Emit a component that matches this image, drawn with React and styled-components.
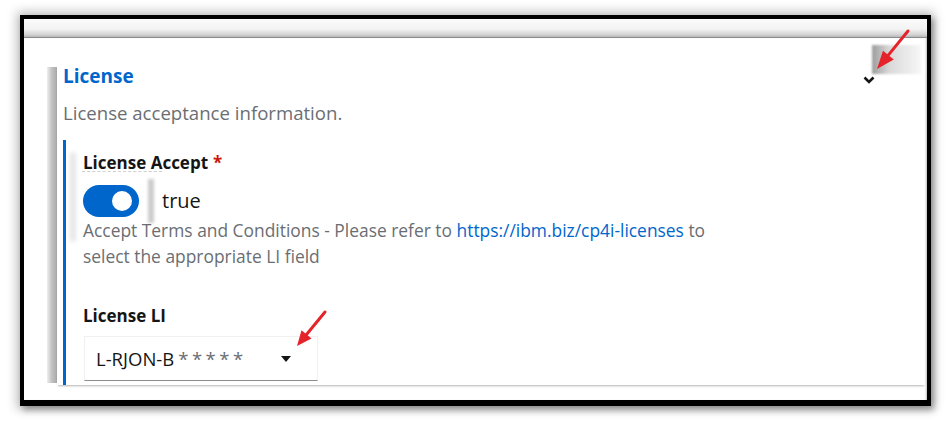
import React from "react";
import styled, { createGlobalStyle } from "styled-components";

const GlobalStyle = createGlobalStyle`
  html, body { margin: 0; padding: 0; background: #fff; }
  body { font-family: "Open Sans", "Noto Sans", sans-serif; }
  * { box-sizing: border-box; }
`;

const Page = styled.div`
  position: relative;
  width: 952px;
  height: 422px;
  padding: 15px 0 0 20px;
  overflow: hidden;
  background: #fff;
`;

const Frame = styled.div`
  width: 911px;
  height: 391px;
  border: 4px solid #000;
  border-bottom-width: 6px;
  background: #fff;
  box-shadow: 0 0 10px 3px rgba(0, 0, 0, 0.26), 3px 4px 6px rgba(0, 0, 0, 0.3);
  display: flex;
  flex-direction: column;
`;

const TopStrip = styled.div`
  flex: none;
  height: 19px;
  border-bottom: 1px solid #8c8c8c;
  background: linear-gradient(to bottom, #fbfbfb 0%, #f3f3f3 55%, #d6d6d6 85%, #b8b8b8 100%);
`;

const Body = styled.div`
  flex: 1;
  display: flex;
  align-items: flex-start;
  padding: 29px 0 15px 23px;
  box-shadow: inset -2px 0 2px -1px rgba(0, 0, 0, 0.25);
`;

const ShadowBand = styled.div`
  flex: none;
  width: 10px;
  align-self: stretch;
  margin-bottom: 2px;
  background: linear-gradient(to right, #efefef 0%, #c4c4c4 45%, #a9a9a9 100%);
`;

const Sheet = styled.section`
  flex: 1;
  margin-right: 2px;
  padding-left: 6px;
  background: #fff;
  display: flex;
  flex-direction: column;
  box-shadow: 0 2px 2px -1px rgba(0, 0, 0, 0.3);
`;

const Header = styled.div`
  display: flex;
  justify-content: space-between;
  align-items: flex-start;
  padding-right: 50px;
`;

const Title = styled.h2`
  margin: 0;
  font-size: 19px;
  line-height: 19px;
  font-weight: 700;
  color: #0066cc;
`;

const Chevron = styled.svg`
  margin-top: 9px;
  display: block;
`;

const Description = styled.p`
  margin: 15px 0 0;
  font-size: 18.6px;
  line-height: 24px;
  color: #6a6e73;
`;

const FieldGroup = styled.div`
  position: relative;
  margin-top: 15px;
  border-left: 3px solid #0066cc;
  padding: 13px 0 4px 17px;
  display: flex;
  flex-direction: column;
  align-items: flex-start;

  &::before {
    content: "";
    position: absolute;
    left: 4px;
    top: 12px;
    width: 6px;
    height: 90px;
    border-radius: 3px;
    background: rgba(0, 0, 0, 0.1);
    filter: blur(2px);
  }
`;

const FieldLabel = styled.label`
  font-size: 17px;
  line-height: 20px;
  font-weight: 700;
  color: #151515;
  margin-top: ${(p) => p.$gap || 0}px;
`;

const Required = styled.span`
  color: #c9190b;
  margin-left: 5px;
`;

const ToggleRow = styled.div`
  position: relative;
  margin-top: 12px;
  height: 32px;
  display: flex;
  align-items: center;
  gap: 23px;

  &::before {
    content: "";
    position: absolute;
    left: -1px;
    top: -14px;
    width: 80px;
    border-top: 1px dashed #cfcfcf;
  }

  &::after {
    content: "";
    position: absolute;
    left: 65px;
    top: -6px;
    width: 6px;
    height: 44px;
    background: rgba(0, 0, 0, 0.2);
    filter: blur(1.5px);
  }
`;

const SwitchTrack = styled.span`
  width: 56px;
  height: 32px;
  border-radius: 16px;
  background: #0066cc;
  display: flex;
  align-items: center;
  justify-content: flex-end;
  padding-right: 7px;
`;

const SwitchKnob = styled.span`
  width: 20px;
  height: 20px;
  border-radius: 50%;
  background: #fff;
`;

const ToggleText = styled.span`
  font-size: 20px;
  line-height: 32px;
  color: #151515;
`;

const Helper = styled.p`
  margin: 0;
  font-size: 17.4px;
  line-height: 26px;
  color: #6a6e73;
`;

const Link = styled.a`
  color: #0066cc;
  text-decoration: none;
`;

const Select = styled.div`
  margin-top: 10px;
  margin-left: 1px;
  width: 234px;
  height: 45px;
  border: 1px solid #f0f0f0;
  border-bottom-color: #8a8d90;
  display: flex;
  align-items: center;
  justify-content: space-between;
  padding: 0 26px 0 11px;
  font-size: 18.5px;
  color: #151515;
`;

const Masked = styled.span`
  color: #6a6e73;
  letter-spacing: 3.5px;
  margin-left: 4px;
`;

const Overlay = styled.svg`
  position: absolute;
  left: 0;
  top: 0;
  pointer-events: none;
`;

function Arrow({ tail, tip, len, half }) {
  const dx = tip[0] - tail[0];
  const dy = tip[1] - tail[1];
  const d = Math.hypot(dx, dy);
  const ux = dx / d;
  const uy = dy / d;
  const bx = tip[0] - ux * len;
  const by = tip[1] - uy * len;
  const px = -uy;
  const py = ux;
  const pts = `${tip[0]},${tip[1]} ${bx + px * half},${by + py * half} ${bx - px * half},${by - py * half}`;
  return (
    <g>
      <line x1={tail[0]} y1={tail[1]} x2={bx + ux * 2} y2={by + uy * 2} stroke="#e5232a" strokeWidth="3" strokeLinecap="round" />
      <polygon points={pts} fill="#e5232a" />
    </g>
  );
}

export default function App() {
  return (
    <Page>
      <GlobalStyle />
      <Frame>
        <TopStrip />
        <Body>
          <ShadowBand />
          <Sheet>
            <Header>
              <Title>License</Title>
              <Chevron width="12" height="8" viewBox="0 0 12 8">
                <path d="M1.5 1.5 L6 6 L10.5 1.5" fill="none" stroke="#151515" strokeWidth="2.6" />
              </Chevron>
            </Header>
            <Description>License acceptance information.</Description>
            <FieldGroup>
              <FieldLabel>
                License Accept<Required>*</Required>
              </FieldLabel>
              <ToggleRow>
                <SwitchTrack>
                  <SwitchKnob />
                </SwitchTrack>
                <ToggleText>true</ToggleText>
              </ToggleRow>
              <Helper>
                Accept Terms and Conditions - Please refer to{" "}
                <Link href="#">https://ibm.biz/cp4i-licenses</Link> to
                <br />
                select the appropriate LI field
              </Helper>
              <FieldLabel $gap={37}>License LI</FieldLabel>
              <Select>
                <span>
                  L-RJON-B<Masked>*****</Masked>
                </span>
                <svg width="10" height="6" viewBox="0 0 10 6">
                  <path d="M0 0 H10 L5 6 Z" fill="#151515" />
                </svg>
              </Select>
            </FieldGroup>
          </Sheet>
        </Body>
      </Frame>
      <Overlay width="952" height="422" viewBox="0 0 952 422">
        <defs>
          <linearGradient id="grayBox" x1="0" x2="1" y1="0" y2="0">
            <stop offset="0" stopColor="#9c9c9c" />
            <stop offset="0.35" stopColor="#d9d9d9" />
            <stop offset="1" stopColor="#f7f7f7" />
          </linearGradient>
          <filter id="soft" x="-20%" y="-20%" width="140%" height="140%">
            <feGaussianBlur stdDeviation="1.2" />
          </filter>
        </defs>
        <rect x="872" y="45" width="49" height="29" fill="url(#grayBox)" filter="url(#soft)" />
        <Arrow tail={[908, 31]} tip={[877, 69]} len={18} half={7} />
        <Arrow tail={[325, 312]} tip={[297, 346]} len={15} half={6.5} />
      </Overlay>
    </Page>
  );
}
